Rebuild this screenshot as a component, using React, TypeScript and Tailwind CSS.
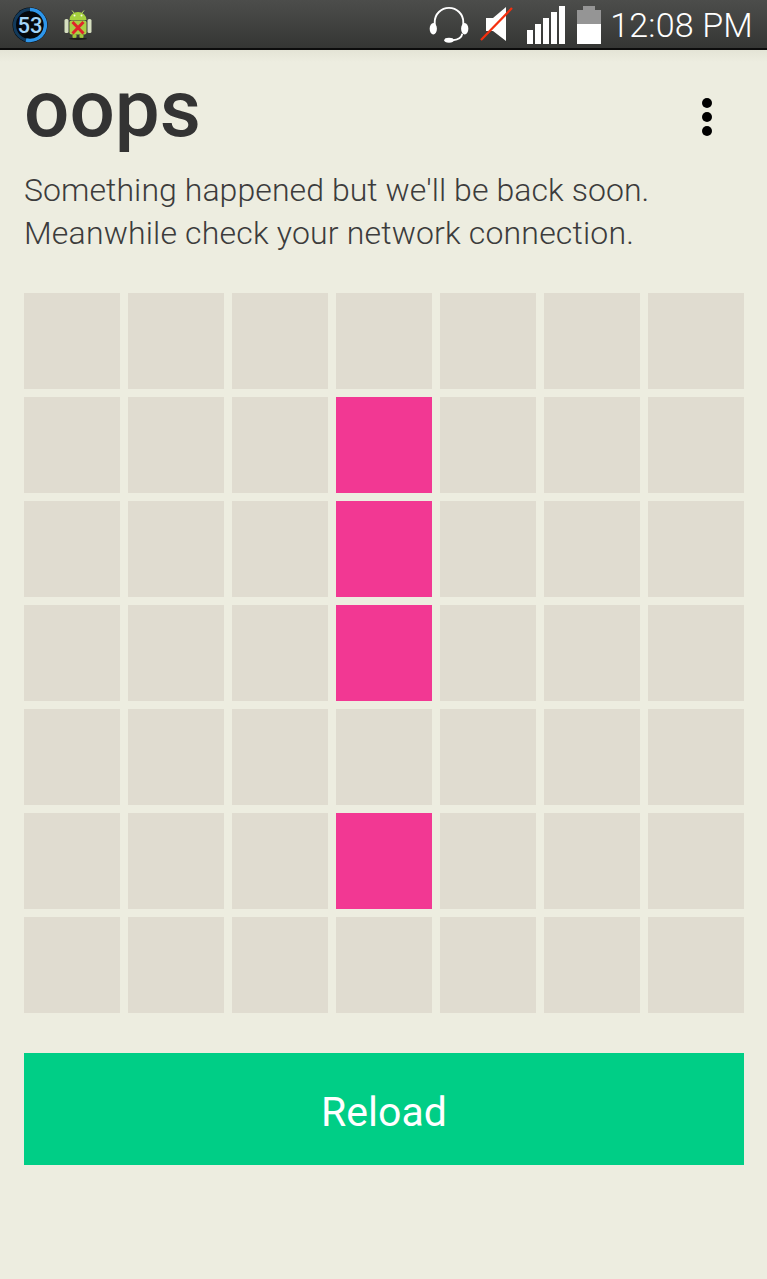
import React from 'react';

const cells = Array.from({ length: 49 }, (_, i) => i);
const pink = [10, 17, 24, 38];

const StatusBar: React.FC = () => (
  <div className="h-[50px] flex items-center justify-between bg-gradient-to-b from-[#4c4d4b] via-[#414240] to-[#353634] border-b-2 border-[#0c0c0c] shrink-0">
    <div className="flex items-center">
      {/* counter badge */}
      <svg width="36" height="36" viewBox="0 0 36 36" className="ml-[12px] mt-[1px]">
        <circle cx="18" cy="18" r="17.5" fill="#05080c" />
        <circle cx="18" cy="18" r="15.5" fill="none" stroke="#123a5c" strokeWidth="3" />
        <path d="M18 2.5 A15.5 15.5 0 1 1 14 33" fill="none" stroke="#2e96ea" strokeWidth="3.4" />
        <text x="18" y="25.5" textAnchor="middle" fontSize="22" fontWeight="500" fill="#a3d4f7" fontFamily="Roboto, sans-serif">53</text>
      </svg>
      {/* android debug icon */}
      <svg width="28" height="31" viewBox="0 0 28 31" className="ml-[16px]">
        <rect x="0.5" y="10" width="4" height="14" rx="1.5" fill="#d6dfc0" />
        <rect x="23.5" y="10" width="4" height="14" rx="1.5" fill="#d6dfc0" />
        <path d="M8 1.5 L10 4 M20 1.5 L18 4" stroke="#b5d86a" strokeWidth="1" />
        <path d="M5.5 11 A8.5 8 0 0 1 22.5 11 Z" fill="#a5d13e" />
        <circle cx="10.5" cy="6.5" r="1" fill="#f6f8e8" />
        <circle cx="17.5" cy="6.5" r="1" fill="#f6f8e8" />
        <rect x="5.5" y="11.5" width="17" height="14" rx="2" fill="#a9d145" />
        <rect x="8.5" y="25" width="4" height="4.5" rx="1.5" fill="#a0c93c" />
        <rect x="15.5" y="25" width="4" height="4.5" rx="1.5" fill="#a0c93c" />
        <ellipse cx="14" cy="29.8" rx="9" ry="1.1" fill="#1d1e1a" />
        <path d="M8.5 13 L19.5 24.5 M19.5 13 L8.5 24.5" stroke="#e0242b" strokeWidth="3" />
      </svg>
    </div>
    <div className="flex items-center">
      {/* headset */}
      <svg width="40" height="40" viewBox="0 0 42 40" className="mr-[11px] mt-[2px]">
        <path d="M6 22 V17 A15 15 0 0 1 36 17 V22" fill="none" stroke="#fff" strokeWidth="2" />
        <ellipse cx="4.5" cy="24" rx="3.8" ry="6" fill="#fff" />
        <ellipse cx="37.5" cy="24" rx="3.8" ry="6" fill="#fff" />
        <path d="M35 29 Q34 35 25 36" fill="none" stroke="#fff" strokeWidth="2" />
        <ellipse cx="21" cy="36" rx="5" ry="2.6" fill="#fff" />
      </svg>
      {/* muted speaker */}
      <svg width="34" height="38" viewBox="0 0 34 38" className="mr-[13px] mt-[2px]">
        <path d="M6 12 H13 L26 1 V35 L13 25 H6 Z" fill="#fff" />
        <path d="M1 34 L32 2" stroke="#f5300f" strokeWidth="2.2" />
      </svg>
      {/* signal */}
      <div className="flex items-end gap-[2px] h-[38px] mr-[12px] mt-[2px]">
        <div className="w-[6px] h-[14px] bg-white" />
        <div className="w-[6px] h-[20px] bg-white" />
        <div className="w-[6px] h-[26px] bg-white" />
        <div className="w-[6px] h-[32px] bg-white" />
        <div className="w-[6px] h-[38px] bg-white" />
      </div>
      {/* battery */}
      <div className="flex flex-col items-center mr-[9px] h-[38px] mt-[2px]">
        <div className="w-[12px] h-[4px] bg-[#959595]" />
        <div className="w-[24px] h-[14px] bg-[#959595]" />
        <div className="w-[24px] h-[20px] bg-white" />
      </div>
      <span className="text-[34px] leading-[50px] text-white font-light mr-[14px] font-['Roboto',sans-serif] tracking-[0.2px] mt-[2px]">12:08 PM</span>
    </div>
  </div>
);

const App: React.FC = () => {
  return (
    <div className="w-[767px] h-[1279px] bg-[#edede0] flex flex-col overflow-hidden font-['Roboto',sans-serif]">
      <StatusBar />
      <div className="h-[12px] -mb-[12px] bg-gradient-to-b from-[#e4e4d6] to-[#edede0] shrink-0" />
      <main className="px-6 flex flex-col">
        <div className="flex items-start justify-between h-[119px]">
          <h1 className="text-[80px] leading-[120px] font-medium text-[#333333] -mt-[1px]">oops</h1>
          <div className="flex flex-col gap-[4px] mt-[48px] mr-[31px]">
            <div className="w-[10px] h-[10px] rounded-full bg-black" />
            <div className="w-[10px] h-[10px] rounded-full bg-black" />
            <div className="w-[10px] h-[10px] rounded-full bg-black" />
          </div>
        </div>
        <p className="text-[32px] leading-[43px] font-light text-[#3c3c3c]">
          <span className="block tracking-[0.07px]">Something happened but we'll be back soon.</span>
          <span className="block tracking-[0.17px]">Meanwhile check your network connection.</span>
        </p>
        <div className="grid grid-cols-[repeat(7,96px)] gap-2 mt-[38px]">
          {cells.map(i => (
            <div key={i} className={`h-[96px] ${pink.includes(i) ? 'bg-[#f23893]' : 'bg-[#e0dcd0]'}`} />
          ))}
        </div>
        <button className="mt-[40px] h-[112px] w-[720px] pt-[7px] bg-[#00ce86] text-white text-[41px] flex items-center justify-center">
          Reload
        </button>
      </main>
    </div>
  );
};

export default App;
